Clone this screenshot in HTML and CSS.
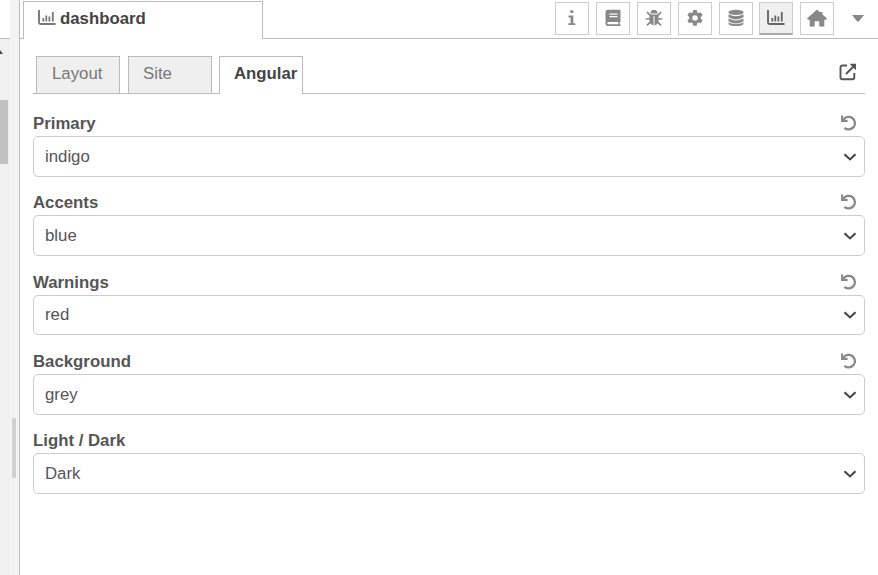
FILE: index.html
```html
<!DOCTYPE html>
<html lang="en">
<head>
<meta charset="utf-8">
<title>dashboard</title>
<link rel="stylesheet" href="styles.css">
</head>
<body>
<svg class="defs" aria-hidden="true">
  <symbol id="chart" viewBox="0 0 18 16"><path d="M1 0V12.500Q1 14 2.500 14H17.500" fill="none" stroke="currentColor" stroke-width="1.900"/><path d="M5.300 8v3.500M8.300 5.500v6M11.400 6.500v5M14.800 2v9.500" fill="none" stroke="currentColor" stroke-width="1.800"/></symbol>
  <symbol id="undo" viewBox="0 0 16 16"><path d="M2.300 4.800A6.300 6.300 0 1 1 3.400 12.800" fill="none" stroke="currentColor" stroke-width="2.300"/><path d="M1.100 .6V5.900H6.600" fill="none" stroke="currentColor" stroke-width="2.100"/></symbol>
  <symbol id="down" viewBox="0 0 14 8"><path d="M1.500 1.200 7 6.400 12.500 1.200" fill="none" stroke="currentColor" stroke-width="2.100"/></symbol>
</svg>
<div class="app">
  <div class="workspace"><div class="corner"></div><div class="track"><div class="arrow"></div><div class="thumb"></div></div></div>
  <div class="separator"><div class="grip"></div></div>
  <main class="sidebar">
    <header class="top">
      <div class="top-tab"><svg class="chart"><use href="#chart"/></svg><span>dashboard</span></div>
      <nav class="tools">
        <button><svg viewBox="0 0 18 18"><path d="M7.300 1.200h3v2.700h-3zM5.500 6.500h4.800v7.700h2v1.900H5.300v-1.900h2.300V8.400H5.500z"/></svg></button>
        <button><svg viewBox="0 0 18 18"><path fill-rule="evenodd" d="M4 .8H16.500V13h-.8v2.300h.8V17H4Q1.500 17 1.500 14.500V3.300Q1.500.8 4 .8ZM5.500 4.500v1.200h8V4.500ZM5.500 7v1.200h8V7ZM4.500 13q-1.200 0-1.200 1.200t1.200 1.100h9.800V13Z"/></svg></button>
        <button><svg viewBox="0 0 18 18"><path d="M5.500 4.500a3.500 3.700 0 0 1 7 0ZM4.500 5.500h9v6.300a4.500 4.500 0 0 1-9 0Z"/><path d="m2 3.200 3.500 3.500M16 3.200l-3.500 3.500M.7 10h16.600M2 16.300l3.500-3.500M16 16.300l-3.500-3.500" fill="none" stroke="currentColor" stroke-width="1.700"/><path d="M9 7v9" stroke="#fff"/></svg></button>
        <button><svg viewBox="0 0 18 18"><path fill-rule="evenodd" d="M7.300 1h3.400l.5 2.300 1.400.8 2.300-.7 1.700 2.900-1.800 1.600v1.800l1.800 1.600-1.700 2.900-2.300-.7-1.400.8-.5 2.400H7.300l-.5-2.400-1.400-.8-2.300.7-1.700-2.900 1.800-1.600V7.900L1.400 6.300l1.700-2.900 2.300.7 1.400-.8ZM9 6.200a2.700 2.700 0 1 0 0 5.400 2.700 2.700 0 0 0 0-5.400Z"/></svg></button>
        <button><svg viewBox="0 0 18 18"><ellipse cx="9" cy="3.400" rx="7.500" ry="2.700"/><path d="M1.500 5.200q7.500 4 15 0v3q-7.500 4.600-15 0ZM1.500 9.500q7.500 4 15 0v2.800q-7.500 4.600-15 0ZM1.500 13.600q7.500 3.300 15 0v.8c0 3.500-15 3.500-15 0Z"/></svg></button>
        <button class="on"><svg class="chart"><use href="#chart"/></svg></button>
        <button><svg class="home" viewBox="0 0 20 18"><path d="M10 .5 12.700 3h2.800v2.500L20 9.500l-1 1.200h-1.700V17.500h-5V12.200H7.700v5.300h-5V10.700H1L0 9.500Z"/></svg></button>
        <svg class="caret" viewBox="0 0 12 7"><path d="M0 0H12L6.800 6.500H5.200Z"/></svg>
      </nav>
    </header>
    <section class="content">
      <div class="tabs">
        <div class="tab">Layout</div><div class="tab">Site</div><div class="tab active">Angular</div>
        <svg class="external" viewBox="0 0 18 18"><path d="M8 2.500H3.500Q1.500 2.500 1.500 4.500V14.300Q1.500 16.300 3.500 16.300H13.300Q15.300 16.300 15.300 14.300V10" fill="none" stroke="currentColor" stroke-width="1.900"/><path d="M7 11 15 3" stroke="currentColor" stroke-width="2"/><path d="M10.500.7H17V7.200Z" fill="currentColor"/></svg>
      </div>
      <div class="form">
        <div class="field"><div class="label">Primary<svg class="undo"><use href="#undo"/></svg></div><div class="select">indigo<svg class="down"><use href="#down"/></svg></div></div>
        <div class="field"><div class="label">Accents<svg class="undo"><use href="#undo"/></svg></div><div class="select">blue<svg class="down"><use href="#down"/></svg></div></div>
        <div class="field"><div class="label">Warnings<svg class="undo"><use href="#undo"/></svg></div><div class="select">red<svg class="down"><use href="#down"/></svg></div></div>
        <div class="field"><div class="label">Background<svg class="undo"><use href="#undo"/></svg></div><div class="select">grey<svg class="down"><use href="#down"/></svg></div></div>
        <div class="field"><div class="label">Light / Dark</div><div class="select">Dark<svg class="down"><use href="#down"/></svg></div></div>
      </div>
    </section>
  </main>
</div>
</body>
</html>
```
FILE: styles.css
```css
* { box-sizing: border-box; }
body { margin: 0; background: #fff; color: #555; font: 16.8px/20px "Liberation Sans", Arial, sans-serif; overflow: hidden; }
.defs { display: none; }
.app { display: flex; height: 575px; }
.workspace { width: 10px; }
.corner { height: 39px; border-bottom: 1px solid #bbb; }
.track { height: 536px; padding-top: 11px; background: #f0f0f0; }
.arrow { width: 3px; height: 4px; background: #444; clip-path: polygon(0 0, 100% 100%, 0 100%); }
.thumb { width: 8px; height: 64px; margin-top: 46px; background: #c1c1c1; }
.separator { width: 10px; padding: 418px 0 0 2px; background: #f3f3f3; border-right: 1px solid #bbb; }
.grip { width: 4px; height: 60px; background: #d0d0d0; }
.sidebar { flex: 1; }
.top { display: flex; justify-content: space-between; height: 39px; padding: 1px 14px 0 3px; background: linear-gradient(#bbb, #bbb) bottom / 100% 1px no-repeat; }
.top-tab { display: flex; width: 240px; height: 38px; padding: 7px 14px; gap: 4px; background: #fff; border: 1px solid #bbb; border-bottom: 0; color: #444; font-weight: bold; }
.chart { width: 18px; height: 16px; color: #777; }
.top-tab .chart { margin-top: 1px; }
.tools { display: flex; padding-top: 1px; gap: 6.8px; color: #888; fill: currentColor; }
button { display: flex; align-items: center; justify-content: center; width: 34px; height: 33px; padding: 0; background: #fff; border: 1px solid #ccc; color: #888; fill: currentColor; }
button svg { width: 18px; height: 18px; margin-top: -1px; }
button .home { width: 20px; }
button.on { background: #efefef; border-bottom: 2px solid #aaa; }
.on .chart { height: 16px; margin-top: 0; color: #666; }
.caret { width: 12px; height: 7px; margin: 13px 0 0 11px; }
.content { padding: 17px 13px 0; }
.tabs { display: flex; height: 38px; padding-left: 3px; background: linear-gradient(#bbb, #bbb) bottom / 100% 1px no-repeat; }
.tab { width: 84px; margin-right: 8px; padding: 7px 0 0 14px; background: #efefef; border: 1px solid #bbb; color: #777; }
.tab:first-child { padding-left: 15px; }
.tab.active { margin-left: -1px; background: #fff; border-bottom: 0; color: #444; font-weight: bold; }
.external { width: 18px; height: 18px; margin: 7px 8px 0 auto; color: #555; }
.form { padding-top: 20px; }
.field { height: 79.25px; }
.label { display: flex; justify-content: space-between; height: 22.2px; font-weight: bold; }
.undo { width: 16px; height: 16px; margin: 1px 8px 0 0; color: #888; }
.select { display: flex; align-items: center; justify-content: space-between; height: 40.6px; padding: 0.8px 7px 0 11px; border: 1px solid #ccc; border-radius: 5px; }
.down { width: 14px; height: 8px; color: #444; }
```
